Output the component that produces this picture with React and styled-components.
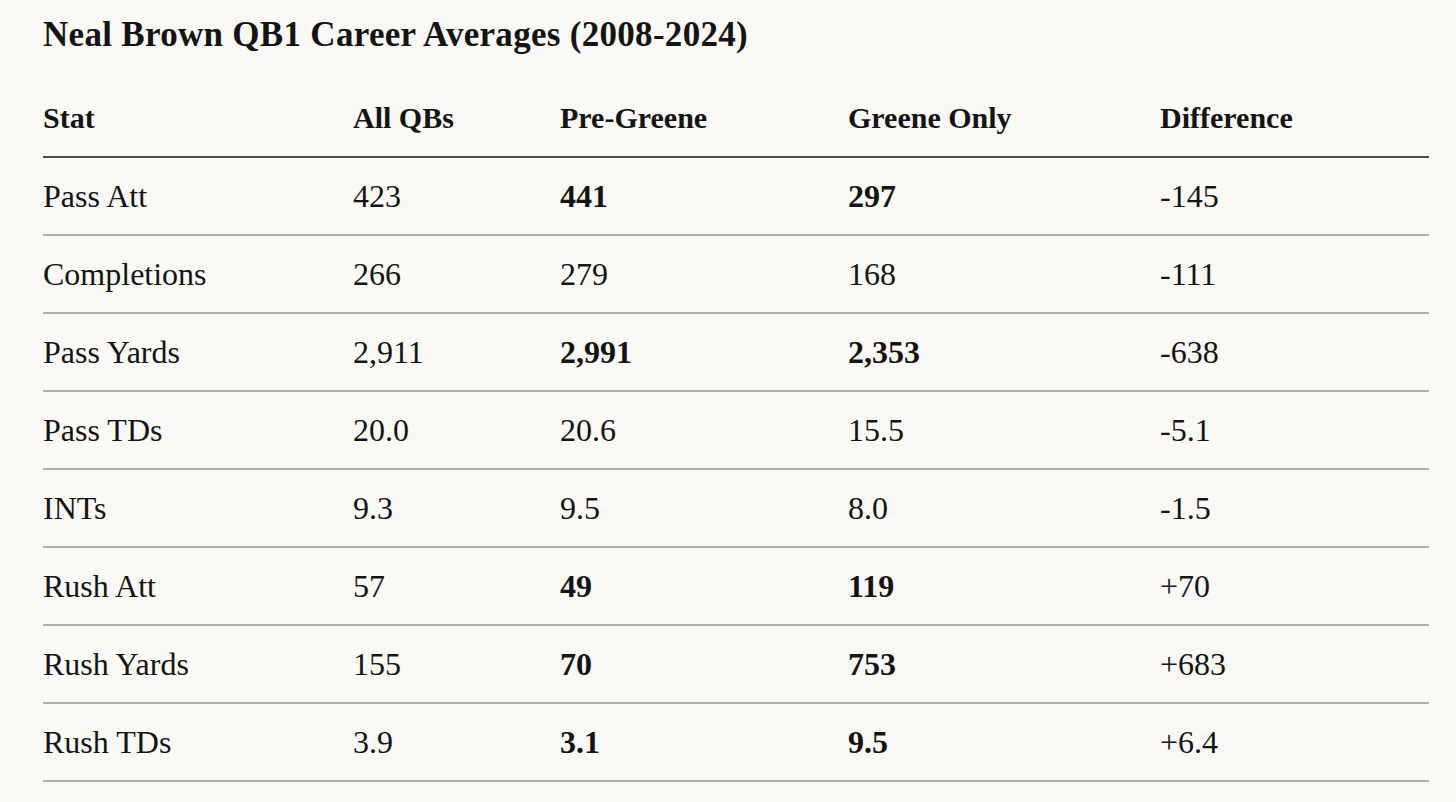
import React from 'react'
import styled, { createGlobalStyle } from 'styled-components'

const GlobalStyle = createGlobalStyle`
    html, body {
        margin: 0;
        padding: 0;
        background: #f9f8f4;
    }
    body {
        font-family: "Liberation Serif", "Times New Roman", serif;
        color: #141414;
    }
`

const Page = styled.div`
    width: 1456px;
    height: 802px;
    padding: 14px 27px 0 43px;
    box-sizing: border-box;
    overflow: hidden;
`

const Title = styled.h1`
    margin: 0;
    font-size: 35px;
    line-height: 42px;
    font-weight: 700;
    letter-spacing: 0.3px;
`

const Table = styled.table`
    width: 100%;
    margin-top: 24px;
    border-collapse: collapse;
    table-layout: fixed;
`

const HeadCell = styled.th`
    height: 76px;
    padding: 0;
    text-align: left;
    font-size: 30px;
    font-weight: 700;
    border-bottom: 2px solid #4d4d4d;
    vertical-align: middle;
`

const Cell = styled.td`
    height: 76px;
    padding: 0;
    font-size: 32px;
    font-weight: ${p => (p.bold ? 700 : 400)};
    border-bottom: 2px solid #acacac;
    vertical-align: middle;
`

const columns = [
    { label: 'Stat', width: 310 },
    { label: 'All QBs', width: 207 },
    { label: 'Pre-Greene', width: 288 },
    { label: 'Greene Only', width: 312 },
    { label: 'Difference', width: 269 },
]

const rows = [
    { stat: 'Pass Att', all: '423', pre: '441', greene: '297', diff: '-145', bold: true },
    { stat: 'Completions', all: '266', pre: '279', greene: '168', diff: '-111' },
    { stat: 'Pass Yards', all: '2,911', pre: '2,991', greene: '2,353', diff: '-638', bold: true },
    { stat: 'Pass TDs', all: '20.0', pre: '20.6', greene: '15.5', diff: '-5.1' },
    { stat: 'INTs', all: '9.3', pre: '9.5', greene: '8.0', diff: '-1.5' },
    { stat: 'Rush Att', all: '57', pre: '49', greene: '119', diff: '+70', bold: true },
    { stat: 'Rush Yards', all: '155', pre: '70', greene: '753', diff: '+683', bold: true },
    { stat: 'Rush TDs', all: '3.9', pre: '3.1', greene: '9.5', diff: '+6.4', bold: true },
]

const App = () => (
    <Page>
        <GlobalStyle />
        <Title>Neal Brown QB1 Career Averages (2008-2024)</Title>
        <Table>
            <colgroup>
                {columns.map(c => (
                    <col key={c.label} style={{ width: c.width }} />
                ))}
            </colgroup>
            <thead>
                <tr>
                    {columns.map(c => (
                        <HeadCell key={c.label}>{c.label}</HeadCell>
                    ))}
                </tr>
            </thead>
            <tbody>
                {rows.map(r => (
                    <tr key={r.stat}>
                        <Cell>{r.stat}</Cell>
                        <Cell>{r.all}</Cell>
                        <Cell bold={r.bold}>{r.pre}</Cell>
                        <Cell bold={r.bold}>{r.greene}</Cell>
                        <Cell>{r.diff}</Cell>
                    </tr>
                ))}
            </tbody>
        </Table>
    </Page>
)

export default App
